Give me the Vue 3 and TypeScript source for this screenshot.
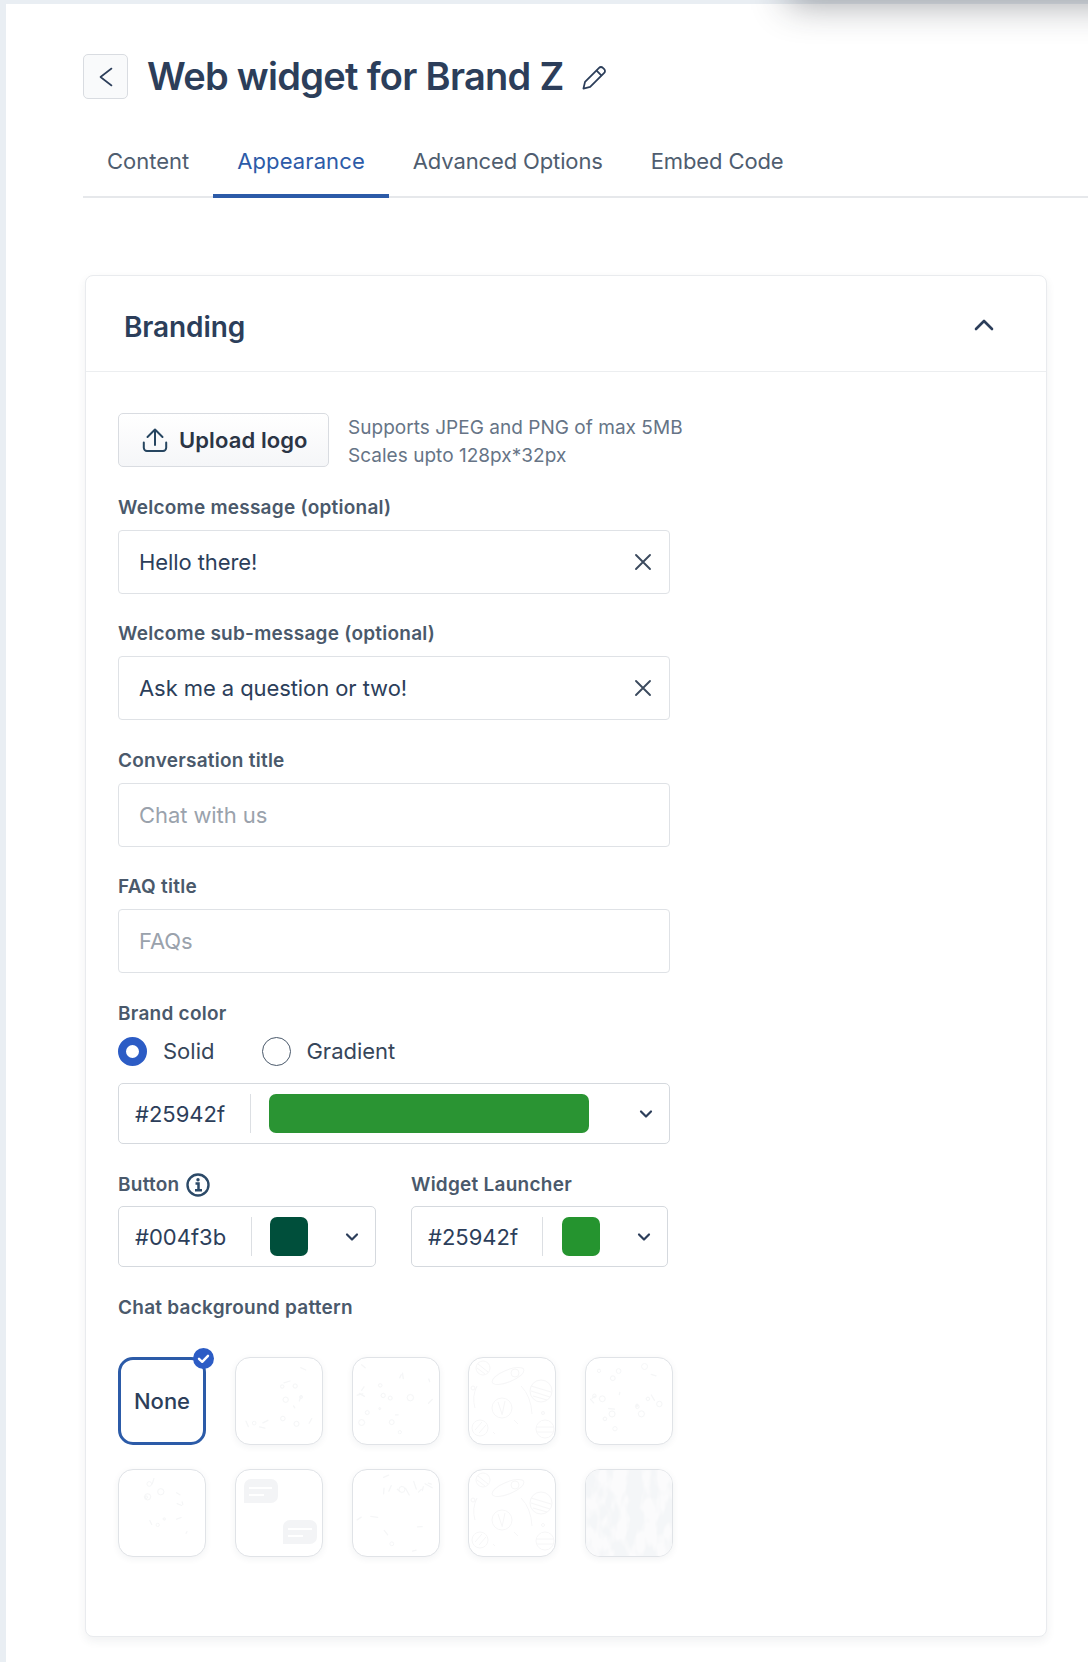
<script setup lang="ts">
type Dot = { cx: number; cy: number; r: number }
type Tile = { dots: Dot[]; strokes: string[]; kind?: 'wash' | 'bubbles' | 'planets' }

const seeded = (seed: number, count: number): Dot[] =>
  Array.from({ length: count }, (_, i) => {
    const a = Math.sin(seed * 12.9 + i * 78.2) * 43758.5
    const b = Math.sin(seed * 39.3 + i * 11.1) * 24634.6
    const c = Math.sin(seed * 7.7 + i * 5.3) * 9631.2
    return {
      cx: 5 + (a - Math.floor(a)) * 76,
      cy: 5 + (b - Math.floor(b)) * 76,
      r: 0.8 + (c - Math.floor(c)) * 2.4
    }
  })

const dashes = (seed: number, count: number, len = 2): string[] =>
  seeded(seed + 50, count).map((d, i) => {
    const angle = i * 2.4 + seed
    const dx = Math.cos(angle) * d.r * len
    const dy = Math.sin(angle) * d.r * len
    return `M${d.cx.toFixed(1)} ${d.cy.toFixed(1)}l${dx.toFixed(1)} ${dy.toFixed(1)}`
  })

const tiles: Tile[] = [
  { dots: seeded(1, 7), strokes: dashes(1, 8) },
  { dots: seeded(2, 9), strokes: dashes(2, 9) },
  { dots: [], strokes: [], kind: 'planets' },
  { dots: seeded(4, 14), strokes: dashes(4, 6) },
  { dots: seeded(5, 6), strokes: dashes(5, 7) },
  { dots: [], strokes: [], kind: 'bubbles' },
  { dots: seeded(7, 2), strokes: dashes(7, 15, 3) },
  { dots: [], strokes: [], kind: 'planets' },
  { dots: [], strokes: [], kind: 'wash' }
]
</script>

<template>
  <div class="page">
    <main class="sheet">
      <div class="glow"></div>

      <header class="head">
        <button class="back" aria-label="Back">
          <svg width="24" height="24" viewBox="0 0 24 24" fill="none" stroke="#2c3e5a" stroke-width="1.6" stroke-linecap="round" stroke-linejoin="round"><path d="M17.500 3.500L6.500 12l11 8.500" /></svg>
        </button>
        <h1>Web widget for Brand Z</h1>
        <svg class="pencil" width="29" height="29" viewBox="0 0 26 26" fill="none" stroke="#2c3e5a" stroke-width="1.600" stroke-linejoin="round"><path d="M4 22l1.400-6L18 3.400a2.400 2.400 0 0 1 3.400 0l1.200 1.200a2.400 2.400 0 0 1 0 3.400L10 20.600z" /><path d="M15.600 5.800l4.600 4.600" /></svg>
      </header>

      <nav class="tabs">
        <a>Content</a>
        <a class="on">Appearance</a>
        <a>Advanced Options</a>
        <a>Embed Code</a>
      </nav>

      <section class="card">
        <div class="card-head">
          <h2>Branding</h2>
          <svg width="24" height="24" viewBox="0 0 24 24" fill="none" stroke="#2c3e5a" stroke-width="2.600" stroke-linecap="round" stroke-linejoin="round"><path d="M4 16l8-8 8 8" /></svg>
        </div>

        <div class="card-body">
          <div class="upload-row">
            <button class="upload">
              <svg width="28" height="28" viewBox="0 0 28 28" fill="none" stroke="#264560" stroke-width="2" stroke-linecap="round" stroke-linejoin="round"><path d="M14 19V3.500M6.500 11L14 3.500 21.500 11" /><path d="M2.800 16.500v5.300A3.200 3.200 0 0 0 6 25h16a3.200 3.200 0 0 0 3.200-3.200v-5.300" /></svg>
              <span>Upload logo</span>
            </button>
            <p class="hint">Supports JPEG and PNG of max 5MB<br />Scales upto 128px*32px</p>
          </div>

          <label class="lbl first">Welcome message (optional)</label>
          <div class="field">
            <span>Hello there!</span>
            <svg width="22" height="22" viewBox="0 0 22 22" fill="none" stroke="#3b4a5e" stroke-width="1.900" stroke-linecap="round"><path d="M4 4l14 14M18 4L4 18" /></svg>
          </div>

          <label class="lbl">Welcome sub-message (optional)</label>
          <div class="field">
            <span>Ask me a question or two!</span>
            <svg width="22" height="22" viewBox="0 0 22 22" fill="none" stroke="#3b4a5e" stroke-width="1.900" stroke-linecap="round"><path d="M4 4l14 14M18 4L4 18" /></svg>
          </div>

          <label class="lbl">Conversation title</label>
          <div class="field ph"><span>Chat with us</span></div>

          <label class="lbl">FAQ title</label>
          <div class="field ph"><span>FAQs</span></div>

          <label class="lbl brand">Brand color</label>
          <div class="radios">
            <span class="radio sel"></span><span class="r-text">Solid</span>
            <span class="radio"></span><span class="r-text">Gradient</span>
          </div>

          <div class="picker wide">
            <span class="hex h-wide">#25942f</span>
            <span class="rule"></span>
            <span class="swatch long"></span>
            <svg class="chev" width="16" height="16" viewBox="0 0 16 16" fill="none" stroke="#2c3e5a" stroke-width="2.200" stroke-linecap="round" stroke-linejoin="round"><path d="M3 5.500l5 5 5-5" /></svg>
          </div>

          <div class="pair">
            <div class="pair-col left">
              <label class="lbl mini">Button
                <svg width="24" height="24" viewBox="0 0 24 24" fill="none" stroke="#2c4a68"><circle cx="12" cy="12" r="10.500" stroke-width="2.400" /><path d="M9.500 10.500H12.500V17M9 17.300h7" stroke-width="2.500" /><circle cx="12" cy="6.800" r="1.700" fill="#2c4a68" stroke="none" /></svg>
              </label>
              <div class="picker">
                <span class="hex h-btn">#004f3b</span>
                <span class="rule"></span>
                <span class="swatch dark"></span>
                <svg class="chev" width="16" height="16" viewBox="0 0 16 16" fill="none" stroke="#2c3e5a" stroke-width="2.200" stroke-linecap="round" stroke-linejoin="round"><path d="M3 5.500l5 5 5-5" /></svg>
              </div>
            </div>
            <div class="pair-col right">
              <label class="lbl mini">Widget Launcher</label>
              <div class="picker">
                <span class="hex">#25942f</span>
                <span class="rule"></span>
                <span class="swatch green"></span>
                <svg class="chev" width="16" height="16" viewBox="0 0 16 16" fill="none" stroke="#2c3e5a" stroke-width="2.200" stroke-linecap="round" stroke-linejoin="round"><path d="M3 5.500l5 5 5-5" /></svg>
              </div>
            </div>
          </div>

          <label class="lbl pattern">Chat background pattern</label>
          <div class="tiles">
            <div class="tile none">
              <span>None</span>
              <svg class="tick" width="21" height="21" viewBox="0 0 21 21"><circle cx="10.500" cy="10.500" r="10.500" fill="#2c5cc5" /><path d="M6 10.800l3.200 3L15 7.800" fill="none" stroke="#fff" stroke-width="2.400" stroke-linecap="round" stroke-linejoin="round" /></svg>
            </div>
            <div v-for="(t, i) in tiles" :key="i" class="tile">
              <svg width="86" height="86" viewBox="0 0 86 86" fill="none">
                <template v-if="t.kind === 'bubbles'">
                  <path d="M15 9h20a7 7 0 0 1 7 7v10a7 7 0 0 1-7 7H8V16a7 7 0 0 1 7-7z" fill="#f3f4f6" />
                  <path d="M13 18h23M13 25h15" stroke="#fff" stroke-width="2" />
                  <path d="M54 50h20a7 7 0 0 1 7 7v10a7 7 0 0 1-7 7H47V57a7 7 0 0 1 7-7z" fill="#f3f4f6" />
                  <path d="M52 59h24M52 66h15" stroke="#fff" stroke-width="2" />
                </template>
                <template v-else-if="t.kind === 'planets'">
                  <g stroke="#f6f6f7">
                    <circle cx="14" cy="10" r="7" />
                    <path d="M9 6l10 8M8 10l8 6" />
                    <ellipse cx="39" cy="18" rx="17" ry="6" transform="rotate(-22 39 18)" />
                    <circle cx="46" cy="15" r="4" />
                    <circle cx="72" cy="33" r="11" />
                    <path d="M62 28l20 6M62 33l19 6M64 38l14 4" />
                    <circle cx="33" cy="50" r="10" />
                    <path d="M29 44l4 12M36 43l-3 14" />
                    <circle cx="11" cy="70" r="8" />
                    <path d="M6 72l7-8M10 75l7-8" />
                    <circle cx="76" cy="71" r="9" />
                    <path d="M67 69h18M68 74h16" />
                    <path d="M8 28a30 30 0 0 0-2 22M52 28q10 10 11 28M45 62l4 4M24 74l2 2" />
                    <circle cx="4" cy="30" r="2" />
                    <circle cx="74" cy="55" r="1.500" />
                  </g>
                </template>
                <template v-else-if="t.kind === 'wash'">
                  <defs>
                    <filter id="wash" x="0" y="0" width="100%" height="100%">
                      <feTurbulence type="fractalNoise" baseFrequency="0.07 0.035" numOctaves="3" seed="4" />
                      <feColorMatrix values="0 0 0 0 0.905 0 0 0 0 0.92 0 0 0 0 0.935 5 0 0 0 -1.900" />
                    </filter>
                  </defs>
                  <rect width="86" height="86" fill="#fbfbfc" />
                  <rect width="86" height="86" filter="url(#wash)" />
                </template>
                <template v-else>
                  <circle v-for="(d, n) in t.dots" :key="n" :cx="d.cx" :cy="d.cy" :r="d.r" stroke="#f5f6f7" />
                  <path v-for="(s, n) in t.strokes" :key="'s' + n" :d="s" stroke="#f5f6f7" stroke-width="1.300" stroke-linecap="round" />
                </template>
              </svg>
            </div>
          </div>
        </div>
      </section>
    </main>
  </div>
</template>

<style>
html, body { margin: 0; background: #fff; }
</style>

<style scoped>
* { box-sizing: border-box; }
.page {
  width: 1088px;
  height: 1662px;
  padding: 4px 0 0 6px;
  background: #e9eef3;
  overflow: hidden;
  font-family: Inter, "Liberation Sans", sans-serif;
  color: #2c3e5a;
}
.sheet {
  position: relative;
  height: 1658px;
  padding: 50px 0 0 77px;
  background: #fff;
}
.glow {
  position: absolute;
  top: -44px;
  left: 782px;
  width: 420px;
  height: 40px;
  background: #b9bdc3;
  box-shadow: 0 4px 36px rgba(30, 35, 45, 0.42);
}
.head { display: flex; align-items: center; height: 45px; }
.back {
  display: flex;
  align-items: center;
  justify-content: center;
  flex: none;
  width: 45px;
  height: 45px;
  padding: 0;
  border: 1px solid #d9dce1;
  border-radius: 5px;
  background: #f9fafb;
}
h1 {
  margin: 0 0 0 19px;
  font-size: 38px;
  line-height: 45px;
  font-weight: 600;
  letter-spacing: -0.7px;
  color: #2c3e5a;
}
.pencil { margin: 4px 0 0 15px; }
.tabs {
  display: flex;
  margin-top: 39px;
  height: 60px;
  border-bottom: 2px solid #e6e8eb;
}
.tabs a {
  height: 60px;
  padding: 8px 24px 0;
  font-size: 22px;
  line-height: 30px;
  color: #4f5d6f;
}
.tabs a.on { letter-spacing: 0.1px; color: #2c5ba8; border-bottom: 4px solid #2c5ba8; }
.tabs a:nth-child(n + 3) { letter-spacing: -0.13px; }
.card {
  width: 962px;
  height: 1362px;
  margin: 77px 0 0 2px;
  border: 1px solid #e9ebee;
  border-radius: 8px;
  background: #fff;
  box-shadow: 0 4px 10px rgba(40, 50, 70, 0.07);
}
.card-head {
  display: flex;
  align-items: center;
  justify-content: space-between;
  height: 96px;
  padding: 0 50px 0 38px;
  border-bottom: 1px solid #eceef0;
}
h2 { margin: 6px 0 0; font-size: 28px; font-weight: 600; letter-spacing: -0.1px; color: #2c3e5a; }
.card-head svg { margin-top: 3px; }
.card-body { padding: 38.5px 0 0 32px; }
.upload-row { display: flex; align-items: center; gap: 19px; }
.upload {
  display: flex;
  align-items: center;
  gap: 10px;
  width: 211px;
  height: 54px;
  padding: 0 0 0 22px;
  border: 1px solid #d9dce1;
  border-radius: 5px;
  background: linear-gradient(#fff, #f5f6f8);
  font-family: inherit;
  font-size: 22px;
  font-weight: 600;
  letter-spacing: 0.1px;
  color: #2b3545;
}
.hint { margin: 0; padding-top: 3px; font-size: 19px; line-height: 28px; color: #667486; letter-spacing: 0.03px; }
.lbl {
  display: block;
  margin: 27.5px 0 10px;
  height: 25px;
  font-size: 19px;
  line-height: 25px;
  font-weight: 600;
  letter-spacing: 0.25px;
  color: #4a596b;
}
.lbl.first { margin-top: 25px; }
.lbl.brand { margin: 28px 0 0; }
.lbl.mini { display: flex; align-items: center; gap: 6px; height: 24px; line-height: 24px; margin: 0 0 9px; }
.lbl.pattern { margin: 28px 0 0; }
.field {
  display: flex;
  align-items: center;
  justify-content: space-between;
  width: 552px;
  height: 64px;
  padding: 0 15px 0 20px;
  border: 1px solid #dfe2e6;
  border-radius: 4px;
  font-size: 22px;
  letter-spacing: -0.08px;
  color: #2c3e5a;
}
.field.ph { color: #9aa2ac; }
.radios { display: flex; align-items: center; height: 30px; margin-top: 10px; }
.radio {
  flex: none;
  width: 29px;
  height: 29px;
  border: 1px solid #4a596b;
  border-radius: 50%;
}
.radio.sel { border: 8px solid #2c5cc5; }
.r-text { margin-left: 15px; margin-right: 48px; font-size: 22px; color: #36465a; }
.radio.sel + .r-text { margin-left: 16px; }
.picker {
  display: flex;
  align-items: center;
  height: 61px;
  padding-left: 16px;
  border: 1px solid #d5d9de;
  border-radius: 5px;
  font-size: 22px;
}
.picker.wide { width: 552px; margin-top: 17px; }
.hex { width: 100px; flex: none; color: #2c3e5a; }
.hex.h-wide { width: 101px; }
.hex.h-btn { width: 102px; }
.rule { width: 1px; height: 39px; flex: none; margin-left: 14px; background: #dcdfe3; }
.swatch { flex: none; height: 39px; margin-left: 18px; border-radius: 7px; }
.swatch.long { width: 320px; background: #2a9433; }
.swatch.dark { width: 38px; background: #004f3b; }
.swatch.green { width: 38px; margin-left: 19px; background: #25942f; }
.chev { margin-left: auto; margin-right: 15px; }
.pair { display: flex; margin-top: 29px; }
.pair-col.left { width: 258px; }
.pair-col.right { width: 257px; margin-left: 35px; }
.tiles {
  display: grid;
  grid-template-columns: repeat(5, 88px);
  column-gap: 28.8px;
  row-gap: 24px;
  margin-top: 37px;
}
.tile {
  position: relative;
  display: flex;
  align-items: center;
  justify-content: center;
  height: 88px;
  border: 1px solid #e0e3e7;
  border-radius: 15px;
  background: #fff;
  box-shadow: 0 2px 7px rgba(40, 50, 70, 0.06);
  overflow: hidden;
}
.tile.none {
  overflow: visible;
  border: 3px solid #2c5ba8;
  box-shadow: none;
  font-size: 22px;
  font-weight: 500;
  color: #2c3e5a;
}
.tick { position: absolute; top: -12px; right: -11px; }
</style>
